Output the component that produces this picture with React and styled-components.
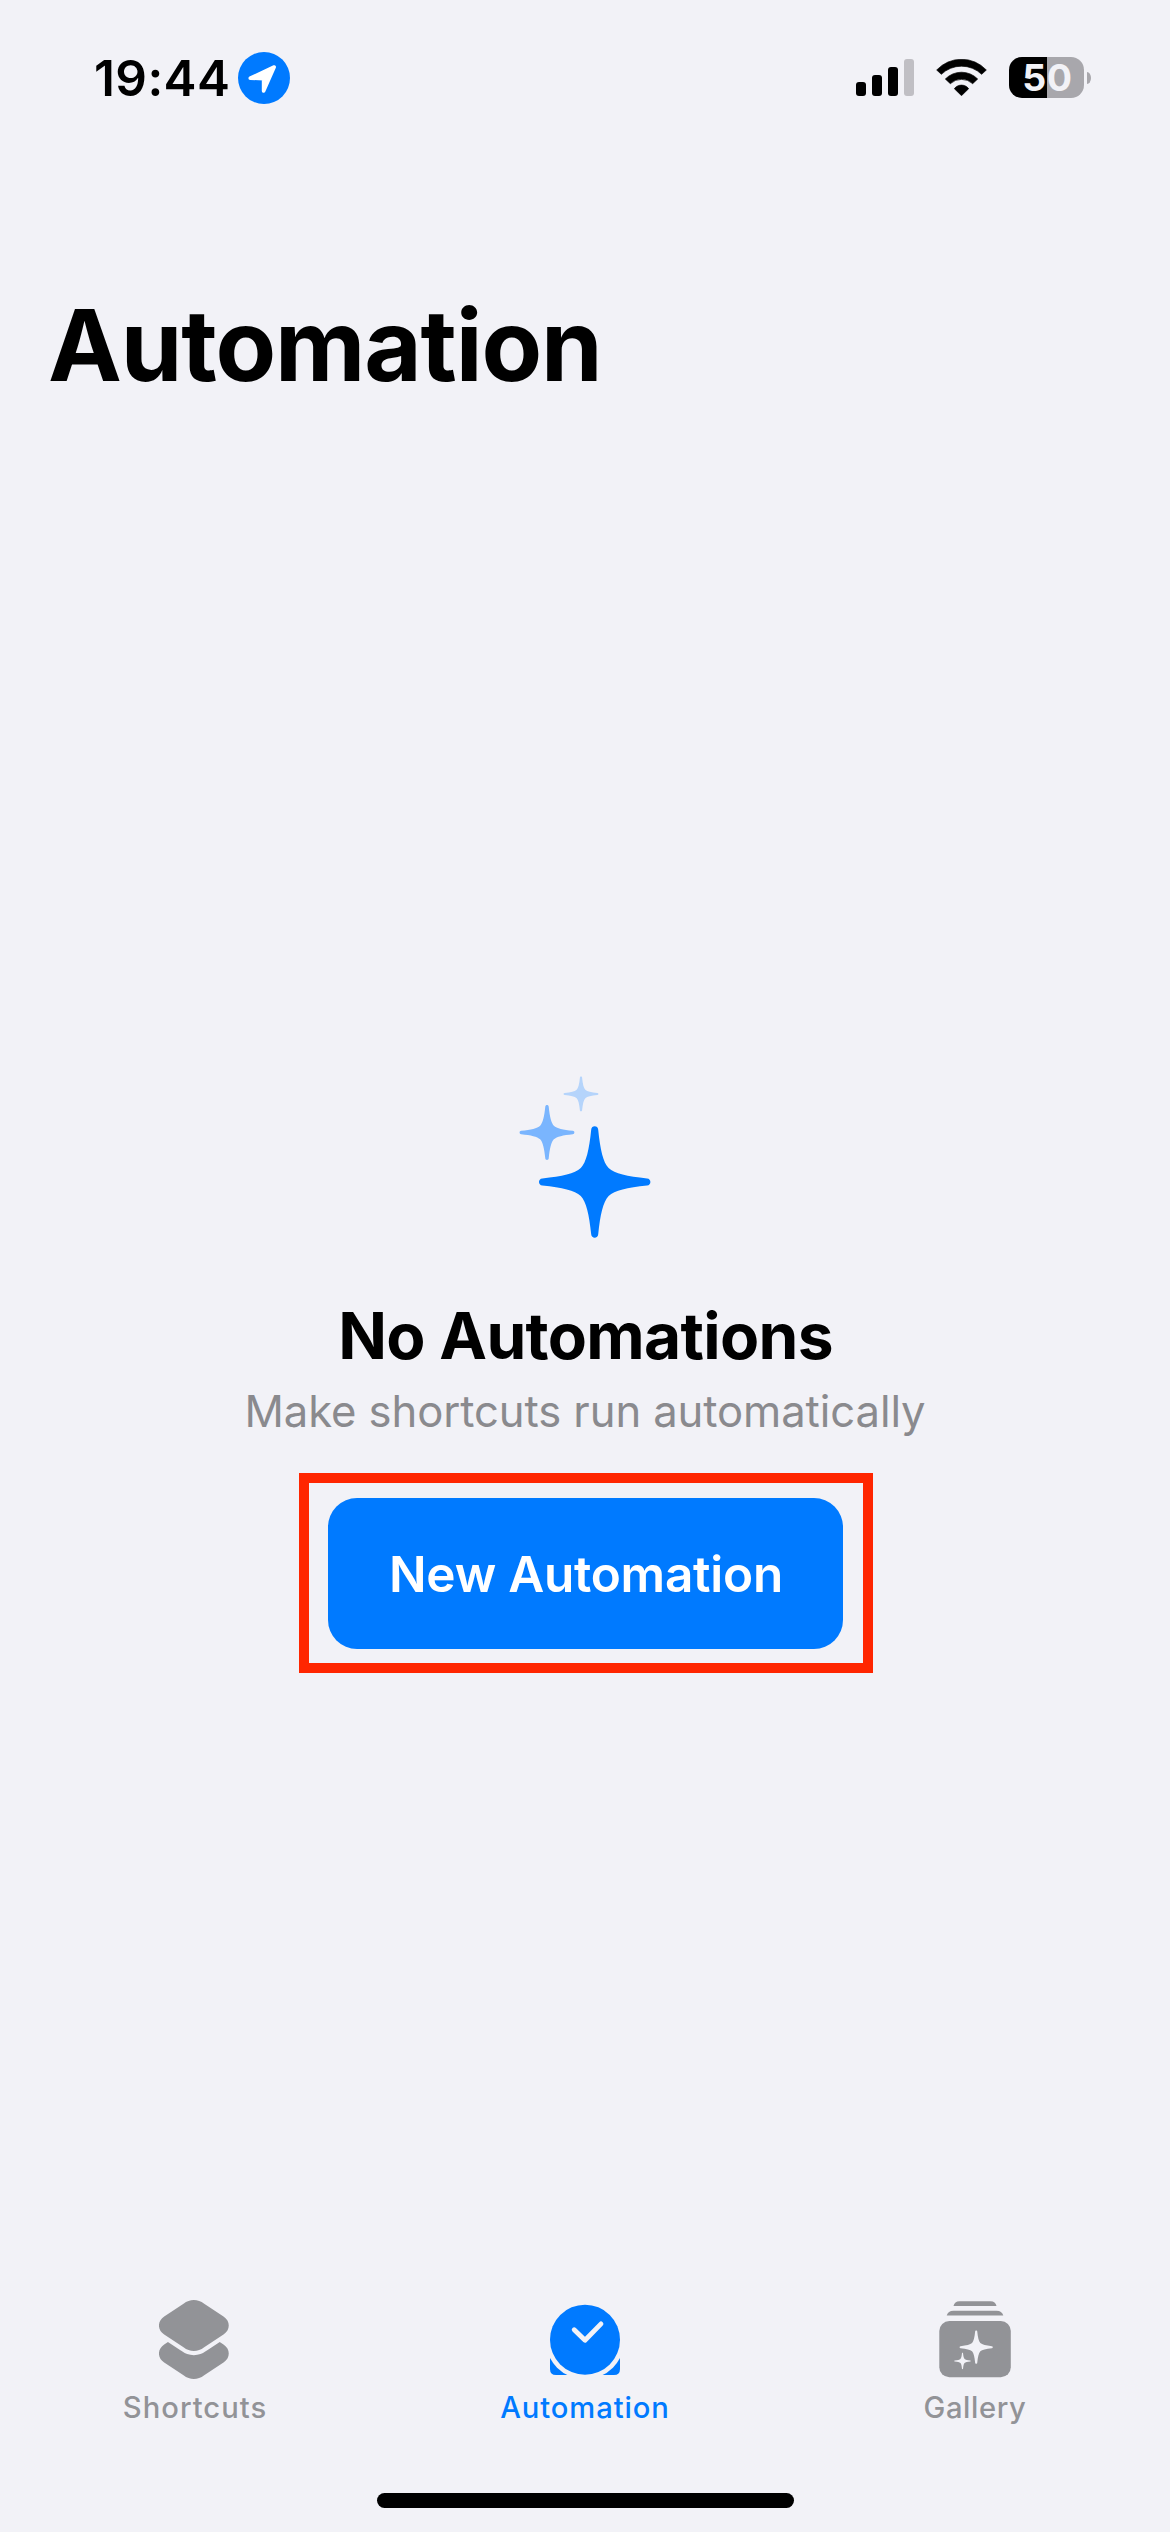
import React from "react";
import styled, { createGlobalStyle } from "styled-components";

const BG = "#f2f2f7";
const BLUE = "#007aff";
const GRAY = "#929397";

const GlobalStyle = createGlobalStyle`
  *, *::before, *::after { box-sizing: border-box; }
  body {
    margin: 0;
    background: ${BG};
    font-family: Inter, "Liberation Sans", sans-serif;
    color: #000;
  }
`;

const Screen = styled.div`
  display: flex;
  flex-direction: column;
  width: 1170px;
  height: 2532px;
  background: ${BG};
  overflow: hidden;
`;

const StatusBar = styled.div`
  display: flex;
  align-items: center;
  justify-content: space-between;
  height: 155px;
  padding: 0 79px 0 94px;
`;

const StatusLeft = styled.div`
  display: flex;
  align-items: center;
  gap: 8px;
  padding-top: 1px;
`;

const Clock = styled.span`
  width: 136px;
  font-size: 49.5px;
  font-weight: 600;
  line-height: 60px;
  letter-spacing: 0.4px;
  white-space: nowrap;
`;

const StatusRight = styled.div`
  display: flex;
  align-items: center;
  gap: 22px;
`;

const Icon = styled.svg`
  display: block;
  flex: none;
`;

const SignalBars = styled.div`
  display: flex;
  align-items: flex-end;
  gap: 6px;
  height: 37px;
`;

const Bar = styled.span`
  width: 10px;
  height: ${(p) => p.$height}px;
  border-radius: 3px;
  background: ${(p) => (p.$off ? "#c0bfc4" : "#000")};
`;

const Battery = styled.div`
  display: flex;
  align-items: center;
  gap: 3px;
`;

const BatteryBody = styled.div`
  display: flex;
  align-items: center;
  justify-content: center;
  width: 75px;
  height: 41px;
  border-radius: 13px;
  background: linear-gradient(90deg, #000 38px, #a8a7ac 38px);
  color: ${BG};
  font-size: 37.5px;
  font-weight: 650;
  line-height: 41px;
  letter-spacing: 0.6px;
  padding-left: 2px;
`;

const BatteryNub = styled.span`
  width: 4px;
  height: 12px;
  border-radius: 0 4px 4px 0 / 0 6px 6px 0;
  background: #a8a7ac;
`;

const Title = styled.h1`
  margin: 130px 0 0 48px;
  font-size: 99px;
  font-weight: 700;
  line-height: 120px;
  letter-spacing: -1.13px;
`;

const EmptyState = styled.main`
  flex: 1;
  display: flex;
  flex-direction: column;
  align-items: center;
  justify-content: center;
  padding-top: 45px;
`;

const Heading = styled.h2`
  margin: 58px 0 8px 1px;
  font-size: 64px;
  font-weight: 700;
  line-height: 80px;
  letter-spacing: -0.68px;
`;

const Subtitle = styled.p`
  margin: 0 0 34px;
  padding-top: 1px;
  font-size: 43.6px;
  line-height: 54px;
  letter-spacing: -0.085px;
  color: #8a8a8e;
`;

const Highlight = styled.div`
  width: 574px;
  height: 200px;
  margin-left: 2px;
  padding: 15px 20px 14px 19px;
  border: 10px solid #ff2600;
`;

const PrimaryButton = styled.button`
  display: block;
  width: 100%;
  height: 151px;
  padding: 1px 0 0 1px;
  border: 0;
  border-radius: 29px;
  background: ${BLUE};
  color: #fff;
  font-family: inherit;
  font-size: 49.5px;
  font-weight: 600;
  line-height: 150px;
  letter-spacing: -0.25px;
`;

const TabBar = styled.nav`
  display: grid;
  grid-template-columns: repeat(3, 1fr);
  height: 126px;
`;

const Tab = styled.a`
  display: flex;
  flex-direction: column;
  align-items: center;
  gap: 10px;
  color: ${(p) => (p.$active ? BLUE : GRAY)};
`;

const TabLabel = styled.span`
  font-size: 29.2px;
  font-weight: 500;
  line-height: 36px;
  letter-spacing: ${(p) => p.$tracking}px;
`;

const HomeArea = styled.div`
  display: flex;
  justify-content: center;
  align-items: flex-end;
  height: 107px;
  padding: 0 0 24px 1px;
`;

const HomeIndicator = styled.div`
  width: 417px;
  height: 15px;
  border-radius: 8px;
  background: #000;
`;

const STAR =
  "M-6.3-94C-6-102 6-102 6.3-94C10-58 15-36 25-25C36-15 58-10 94-6.3C102-6 102 6 94 6.3C58 10 36 15 25 25C15 36 10 58 6.3 94C6 102-6 102-6.3 94C-10 58-15 36-25 25C-36 15-58 10-94 6.3C-102 6-102-6-94-6.3C-58-10-36-15-25-25C-15-36-10-58-6.3-94Z";

const Star = ({ x, y, r, fill }) => (
  <path d={STAR} fill={fill} transform={`translate(${x} ${y}) scale(${r / 100})`} />
);

const LocationIcon = () => (
  <Icon width="52" height="52" viewBox="0 0 52 52">
    <circle cx="26" cy="26" r="26" fill={BLUE} />
    <path
      d="M12.2 26.2L36.2 15L25.6 39V26.6Z"
      fill="#fff"
      stroke="#fff"
      strokeWidth="3.6"
      strokeLinejoin="round"
    />
  </Icon>
);

const WifiIcon = () => (
  <Icon width="51" height="37" viewBox="288 57 153 111">
    <g stroke="#000" strokeWidth="2" strokeLinejoin="round">
      <path d="M290 90A102 102 0 0 1 439 90L425 103A87 87 0 0 0 304 103Z" />
      <path d="M316 117A68 68 0 0 1 413 117L398 131A50 50 0 0 0 331 131Z" />
      <path d="M343 146A27 27 0 0 1 386 146L364.5 167Z" />
    </g>
  </Icon>
);

const SparklesIcon = () => (
  <Icon width="132" height="162" viewBox="519 1076 132 162">
    <Star x={581} y={1094} r={17.4} fill="#b5d4fb" />
    <Star x={547} y={1132.5} r={27.4} fill="#7ab5fe" />
    <Star x={594.7} y={1182} r={55.7} fill={BLUE} />
  </Icon>
);

const DIAMOND =
  "M24.5 3.8C31-1.2 38.7-1.2 45.2 3.8L64.5 16.5C71.5 21 71.5 30 64.5 34.5L45.2 47.2C38.7 52.2 31 52.2 24.5 47.2L5.2 34.5C-1.8 30-1.8 21 5.2 16.5Z";

const ShortcutsIcon = () => (
  <Icon width="72" height="81" viewBox="0 -1 72 81">
    <path d={DIAMOND} fill="currentColor" transform="translate(0 28)" />
    <path d={DIAMOND} fill={BG} stroke={BG} strokeWidth="8.5" />
    <path d={DIAMOND} fill="currentColor" />
  </Icon>
);

const AutomationIcon = () => (
  <Icon width="70" height="81" viewBox="550 2299 70 81">
    <path d="M550 2350H620V2369Q620 2375 614 2375H556Q550 2375 550 2369Z" fill="currentColor" />
    <circle cx="585" cy="2339.7" r="39.5" fill={BG} />
    <circle cx="585" cy="2339.7" r="35" fill="currentColor" />
    <path
      d="M574.2 2329.7L585 2340.3L601 2323.9"
      fill="none"
      stroke={BG}
      strokeWidth="4.8"
      strokeLinecap="round"
      strokeLinejoin="round"
    />
  </Icon>
);

const GalleryIcon = () => (
  <Icon width="72" height="81" viewBox="937.5 2299 72 81">
    <g fill="currentColor">
      <path d="M952 2306Q953 2301.3 958 2301.3H989Q994 2301.3 995 2306Z" />
      <path d="M945.2 2315.5Q946.5 2310.7 952 2310.7H995Q1000.5 2310.7 1001.8 2315.5Z" />
      <rect x="937.8" y="2321" width="71.5" height="56.3" rx="10" />
    </g>
    <Star x={974.7} y={2347.2} r={16.6} fill={BG} />
    <Star x={961} y={2361} r={8.3} fill={BG} />
  </Icon>
);

const tabs = [
  { label: "Shortcuts", icon: ShortcutsIcon, tracking: 1 },
  { label: "Automation", icon: AutomationIcon, tracking: 0.9, active: true },
  { label: "Gallery", icon: GalleryIcon, tracking: 0.6 },
];

export default function App() {
  return (
    <Screen>
      <GlobalStyle />
      <StatusBar>
        <StatusLeft>
          <Clock>19:44</Clock>
          <LocationIcon />
        </StatusLeft>
        <StatusRight>
          <SignalBars>
            <Bar $height={14} />
            <Bar $height={21} />
            <Bar $height={29} />
            <Bar $height={37} $off />
          </SignalBars>
          <WifiIcon />
          <Battery>
            <BatteryBody>50</BatteryBody>
            <BatteryNub />
          </Battery>
        </StatusRight>
      </StatusBar>
      <Title>Automation</Title>
      <EmptyState>
        <SparklesIcon />
        <Heading>No Automations</Heading>
        <Subtitle>Make shortcuts run automatically</Subtitle>
        <Highlight>
          <PrimaryButton>New Automation</PrimaryButton>
        </Highlight>
      </EmptyState>
      <TabBar>
        {tabs.map(({ label, icon: TabIcon, tracking, active }) => (
          <Tab key={label} $active={active}>
            <TabIcon />
            <TabLabel $tracking={tracking}>{label}</TabLabel>
          </Tab>
        ))}
      </TabBar>
      <HomeArea>
        <HomeIndicator />
      </HomeArea>
    </Screen>
  );
}
